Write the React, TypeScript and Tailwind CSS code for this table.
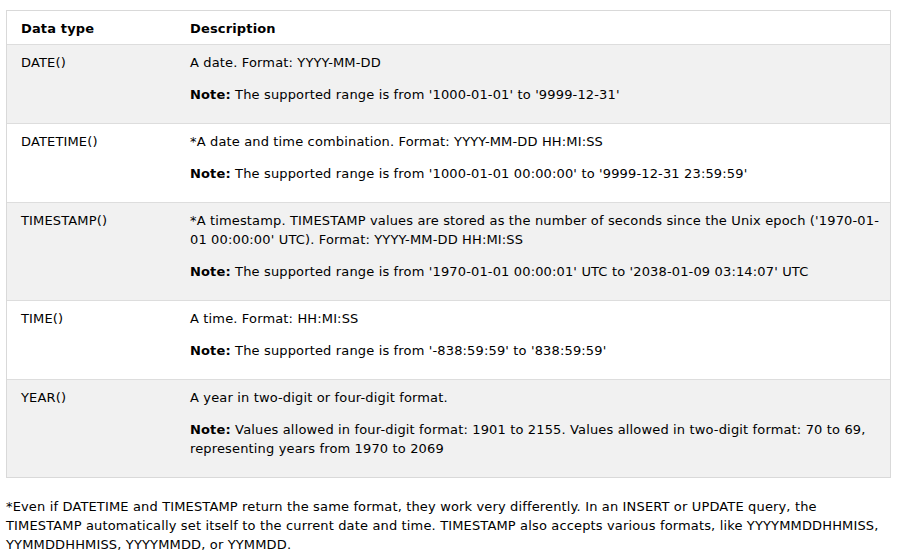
const rows = [
  {
    type: "DATE()",
    desc: ["A date. Format: YYYY-MM-DD"],
    note: "The supported range is from '1000-01-01' to '9999-12-31'",
    shaded: true,
  },
  {
    type: "DATETIME()",
    desc: ["*A date and time combination. Format: YYYY-MM-DD HH:MI:SS"],
    note: "The supported range is from '1000-01-01 00:00:00' to '9999-12-31 23:59:59'",
    shaded: false,
  },
  {
    type: "TIMESTAMP()",
    desc: [
      "*A timestamp. TIMESTAMP values are stored as the number of seconds since the Unix epoch ('1970-01-",
      "01 00:00:00' UTC). Format: YYYY-MM-DD HH:MI:SS",
    ],
    note: "The supported range is from '1970-01-01 00:00:01' UTC to '2038-01-09 03:14:07' UTC",
    shaded: true,
  },
  {
    type: "TIME()",
    desc: ["A time. Format: HH:MI:SS"],
    note: "The supported range is from '-838:59:59' to '838:59:59'",
    shaded: false,
  },
  {
    type: "YEAR()",
    desc: ["A year in two-digit or four-digit format."],
    note: [
      "Values allowed in four-digit format: 1901 to 2155. Values allowed in two-digit format: 70 to 69,",
      "representing years from 1970 to 2069",
    ],
    shaded: true,
  },
];

export default function App() {
  return (
    <div className="min-h-[554px] w-[900px] bg-white pl-[6px] pt-[10px] text-[13px] leading-[19px] tracking-[0.15px] text-black font-['DejaVu_Sans','Verdana',sans-serif]">
      {/* Table */}
      <div className="w-[885px] border border-[#d9d9d9]">
        <div className="flex border-b border-[#dddddd] bg-white font-bold">
          <div className="w-[175px] shrink-0 pl-[14px] pt-[8px] pb-[6px]">Data type</div>
          <div className="flex-1 px-[8px] pt-[8px] pb-[6px]">Description</div>
        </div>

        {rows.map((row, i) => (
          <div
            key={i}
            className={`flex ${i < rows.length - 1 ? "border-b border-[#dddddd]" : ""} ${row.shaded ? "bg-[#f1f1f1]" : "bg-white"}`}
          >
            <div className="w-[175px] shrink-0 pl-[14px] pt-[8px]">{row.type}</div>
            <div className="flex-1 px-[8px] pt-[8px] pb-[6px] whitespace-nowrap">
              <p className="mb-[13px]">
                {row.desc.map((line, j) => (
                  <span key={j} className="block">{line}</span>
                ))}
              </p>
              <p className="mb-[13px]">
                <b>Note:</b>{" "}
                {Array.isArray(row.note) ? (
                  <>
                    {row.note[0]}
                    <br />
                    {row.note[1]}
                  </>
                ) : (
                  row.note
                )}
              </p>
            </div>
          </div>
        ))}
      </div>

      {/* Footnote */}
      <p className="mt-[19px] whitespace-nowrap">
        *Even if DATETIME and TIMESTAMP return the same format, they work very differently. In an INSERT or UPDATE query, the
        <br />
        TIMESTAMP automatically set itself to the current date and time. TIMESTAMP also accepts various formats, like YYYYMMDDHHMISS,
        <br />
        YYMMDDHHMISS, YYYYMMDD, or YYMMDD.
      </p>
    </div>
  );
}
